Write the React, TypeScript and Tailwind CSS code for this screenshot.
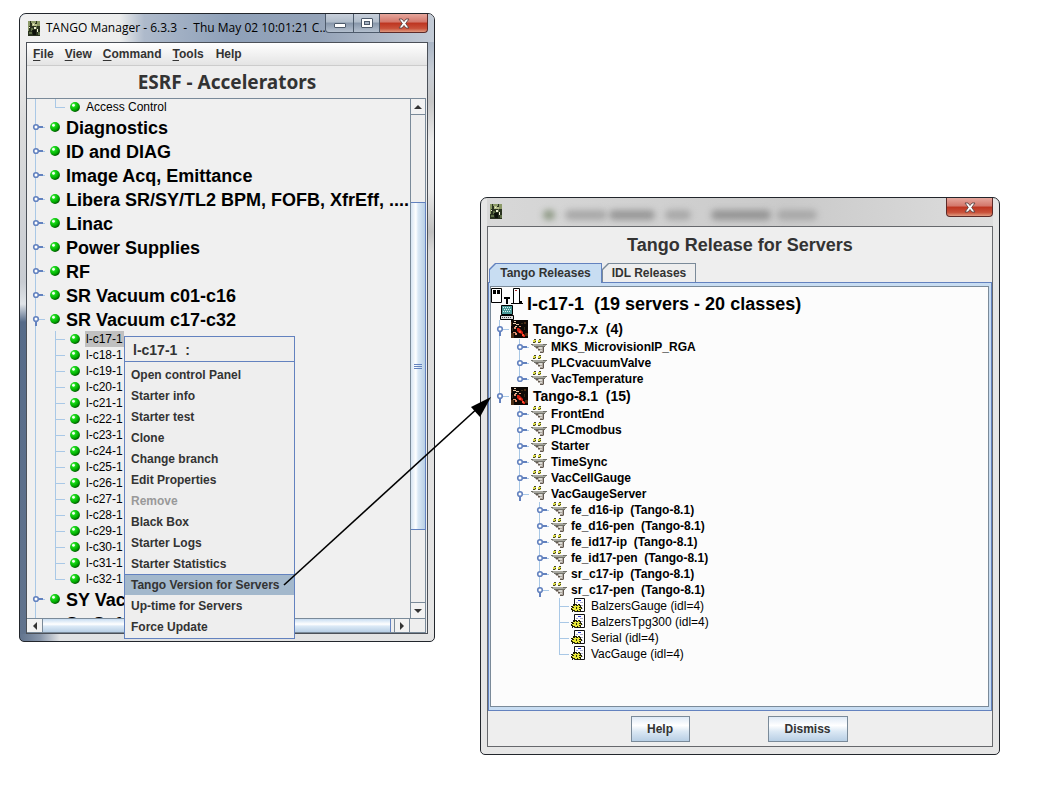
import React from 'react';

type Guide = 'none' | 'line' | 'tee' | 'elbow' | 'closed' | 'open' | 'closedEnd' | 'openEnd';

function GuideCell({ kind, h }: { kind: Guide; h: number }) {
  const mid = Math.floor(h / 2);
  const ends = kind === 'elbow' || kind === 'closedEnd' || kind === 'openEnd';
  const branch = kind !== 'none' && kind !== 'line';
  const closed = kind === 'closed' || kind === 'closedEnd';
  const open = kind === 'open' || kind === 'openEnd';
  return (
    <svg width="20" height={h} viewBox={`0 0 20 ${h}`} className="block shrink-0" aria-hidden="true">
      {kind !== 'none' && <rect x="8" y="0" width="1" height={ends ? mid + 1 : h} fill="#a9c8e6" />}
      {branch && <rect x="8" y={mid} width="10" height="1" fill="#a9c8e6" />}
      {closed && <rect x="10" y={mid - 1} width="6" height="2" fill="#6382bf" />}
      {open && <rect x="8" y={mid + 1} width="2" height="6" fill="#6382bf" />}
      {(closed || open) && <circle cx="9" cy={mid} r="2.3" fill="#fff" stroke="#6382bf" strokeWidth="1.6" />}
    </svg>
  );
}

function Ball() {
  return (
    <svg width="10" height="10" viewBox="0 0 11 11" className="ml-[3px] block shrink-0" aria-hidden="true">
      <defs>
        <radialGradient id="ball" cx="0.35" cy="0.3" r="0.75">
          <stop offset="0" stopColor="#a8ffa0" />
          <stop offset="0.3" stopColor="#18d818" />
          <stop offset="0.7" stopColor="#00a800" />
          <stop offset="1" stopColor="#004800" />
        </radialGradient>
      </defs>
      <circle cx="5.5" cy="5.5" r="5.4" fill="url(#ball)" />
      <circle cx="3.8" cy="3.6" r="1.5" fill="#fff" fillOpacity="0.95" />
    </svg>
  );
}

function AppIcon() {
  return (
    <svg width="12" height="15" viewBox="0 0 12 15" className="block shrink-0" aria-hidden="true">
      <rect width="12" height="15" fill="#2a3320" />
      <path d="M0 0h2v5H1v5H0zM3 0h5v2H3zM9 0h3v5H9z" fill="#8c9a68" />
      <path d="M4 2h3v3H4zM7 3h2v2H7z" fill="#b4bc88" />
      <path d="M5 3h1v1H5zM6 6h2v2H6zM9 8h1v3H9zM1 6h1v1H1z" fill="#eef0d4" />
      <path d="M3 7h2v3H3zM8 5h1v3H8zM1 11h3v2H1zM10 11h2v3h-2z" fill="#5f7048" />
      <path d="M4 9h4v5H5z" fill="#0c100a" />
    </svg>
  );
}

function DancerIcon() {
  return (
    <svg width="17" height="18" viewBox="0 0 17 18" className="block shrink-0" aria-hidden="true">
      <rect width="17" height="18" fill="#0c0806" />
      <path d="M0 2h1v4H0zM0 13h3v5H0zM13 2h2v2h-2zM14 13h3v3h-3z" fill="#4a2c14" />
      <path d="M3 1h2v1H3zM2 3h3v1H2zM5 4h3v1H5zM4 6h2v1H4z" fill="#e8c8a8" />
      <path d="M6 8h2l2 2 2 2v2l2 1v2h-2l-1-3-3-1-2-2z" fill="#d81c10" />
      <path d="M3 7h2v2H3zM8 6h2v1H8zM2 12h3v1H2zM4 13h2v2H4z" fill="#e09070" />
      <path d="M8 11h2v2H8zM11 14h2v2h-2z" fill="#ff5030" />
      <path d="M1 8h1v3H1zM13 7h1v3h-1zM10 3h2v1h-2z" fill="#382814" />
    </svg>
  );
}

function ServerIcon() {
  return (
    <svg width="16" height="15" viewBox="0 0 16 15" className="block shrink-0" aria-hidden="true">
      <path d="M2 1h3v3H2zM7 1h3v3H7z" fill="#dede48" />
      <path d="M3 0h2v1H3zM4 2h1v1H4zM8 0h2v1H8zM9 2h1v1H9zM2 3h2v1H2zM7 3h2v1H7z" fill="#44442c" />
      <path d="M1 5h14v2H1z" fill="#a8a8a0" />
      <path d="M0 5h2v1H0zM12 5h4v1h-4zM3 7h11v1H3z" fill="#707068" />
      <path d="M5 8h8v6H9v-2H7v-2H5z" fill="#b0a8a0" />
      <path d="M4 8h3v1H5zM7 10h2v1H7zM12 8h1v5h-1zM9 13h3v1H9z" fill="#605850" />
      <path d="M8 8h3v2H8zM9 11h2v1H9z" fill="#dcdcd6" />
    </svg>
  );
}

function ClassIcon() {
  return (
    <svg width="15" height="15" viewBox="0 0 15 15" className="block shrink-0" aria-hidden="true">
      <path d="M3.5.5h10v13h-10z" fill="#fff" stroke="#111" />
      <path d="M7 2h3v1H7z" fill="#2838d8" />
      <path d="M5 4h2v1H5zM9 4h3v1H9zM10 7h2v1h-2zM11 10h1v1h-1z" fill="#b0b0cc" />
      <path d="M2 6h1v1h1V6h2v1h1V6h2v1h1v2h1v2h-1v2H9v1H7v-1H6v1H4v-1H2v1H1v-2H0v-2h1V9H0V8h2z" fill="#222206" />
      <path d="M2 8h2V7h1v1h2V7h1v1h1v1H8v1h2v1H8v1h1v1H7v-1H6v1H4v-1H2v-1H1v-1h2V9H2z" fill="#e8e838" />
      <path d="M5 9h1v2H5z" fill="#333308" />
    </svg>
  );
}

function HostIcon() {
  return (
    <svg width="32" height="32" viewBox="0 0 32 32" className="block shrink-0" aria-hidden="true">
      <path d="M.5.5h10v14h-10z" fill="#fff" stroke="#000" />
      <path d="M2 2h3v4H2zM6 2h3v4H6z" fill="#000" />
      <path d="M22.500.5h6v15h-6z" fill="#fff" stroke="#000" />
      <path d="M24 2h2v1h-2z" fill="#a02020" />
      <path d="M20 15h12v1H20zM29 13h2v2h-2zM13 9h6v2h-2v5h-2v-5h-2z" fill="#000" />
      <path d="M10.500 17.500h11v9h-11z" fill="#4a9a98" stroke="#000" />
      <path d="M12 19h1v1h-1zM14 19h1v1h-1zM16 19h1v1h-1zM18 19h1v1h-1zM13 21h1v1h-1zM15 21h1v1h-1zM17 21h1v1h-1zM19 21h1v1h-1zM12 23h1v1h-1zM14 23h1v1h-1zM16 23h1v1h-1zM18 23h1v1h-1z" fill="#d8f0f0" />
      <path d="M9.500 27.500h13v4h-13z" fill="#ddd" stroke="#000" />
      <path d="M11 29h1v1h-1zM13 29h1v1h-1zM15 29h1v1h-1zM17 29h1v1h-1zM19 29h1v1h-1z" fill="#444" />
    </svg>
  );
}

function CloseGlyph() {
  return (
    <svg width="12" height="11" viewBox="0 0 12 11" aria-hidden="true">
      <path d="M1 1h3l2 2.500L8 1h3L7.700 5.500 11 10H8L6 7.500 4 10H1l3.300-4.500z" fill="#fff" stroke="#5b4444" strokeWidth="0.9" />
    </svg>
  );
}

const CLOSE =
  'flex items-center justify-center rounded-b-[4px] border border-t-0 border-[#5c2a28] bg-[linear-gradient(#e6a79d_0%,#d3766a_45%,#bd3420_50%,#c9513a_80%,#e09a80_100%)]';

const groups = ['Diagnostics', 'ID and DIAG', 'Image Acq, Emittance', 'Libera SR/SY/TL2 BPM, FOFB, XfrEff, ....', 'Linac', 'Power Supplies', 'RF', 'SR Vacuum c01-c16'];
const hosts = Array.from({ length: 16 }, (_, i) => `l-c${17 + i}-1`);

function BigRow({ label, open }: { label: string; open?: boolean }) {
  return (
    <li role="treeitem" aria-expanded={!!open} className="flex h-6 items-center">
      <GuideCell kind={open ? 'open' : 'closed'} h={24} />
      <Ball />
      <span className="ml-1.5 pt-px text-lg leading-6 font-bold whitespace-pre">{label}</span>
    </li>
  );
}

function SmallRow({ label, last, selected }: { label: string; last?: boolean; selected?: boolean }) {
  return (
    <li role="treeitem" aria-selected={!!selected} className="flex h-4 items-center">
      <GuideCell kind="line" h={16} />
      <GuideCell kind={last ? 'elbow' : 'tee'} h={16} />
      <Ball />
      <span className={`ml-[5px] px-px text-xs leading-4 whitespace-pre ${selected ? 'bg-[#c0c0c0]' : ''}`}>{label}</span>
    </li>
  );
}

const menuItems = ['Open control Panel', 'Starter info', 'Starter test', 'Clone', 'Change branch', 'Edit Properties', 'Remove', 'Black Box', 'Starter Logs', 'Starter Statistics', 'Tango Version for Servers', 'Up-time for Servers', 'Force Update'];

function ContextMenu() {
  return (
    <div role="menu" aria-label="l-c17-1" className="absolute top-[336px] left-[124px] w-[171px] border border-[#6382bf] bg-[#eeeeee] text-[#333333]">
      <div className="mb-0.5 h-[25px] border-b border-[#6382bf] pl-2 text-sm leading-[26px] font-bold whitespace-pre">{'l-c17-1  :'}</div>
      <div className="pb-px">
        {menuItems.map((m) => (
          <button
            key={m}
            role="menuitem"
            disabled={m === 'Remove'}
            className={`block h-[21px] w-full pl-1.5 text-left text-xs font-bold whitespace-nowrap disabled:text-[#999999] ${m === 'Tango Version for Servers' ? 'border-t border-[#6382bf] bg-[#a3b8cc] leading-5' : 'pt-px leading-5'}`}
          >
            {m}
          </button>
        ))}
      </div>
    </div>
  );
}

const SCROLL_BTN = 'flex shrink-0 items-center justify-center border border-[#7a8a99] bg-[#f2f2f2]';

function Triangle({ d }: { d: string }) {
  return (
    <svg width="8" height="8" viewBox="0 0 8 8" aria-hidden="true">
      <path d={d} fill="#333" />
    </svg>
  );
}

function ManagerWindow() {
  return (
    <section
      aria-label="TANGO Manager"
      className="absolute top-[13px] left-[19px] flex w-[416px] flex-col rounded-t-[7px] rounded-b-[5px] border border-[#22262c] bg-[linear-gradient(90deg,#61738d_0px,#8896aa_20px,#e0e2e4_40px,#e4e4e4_100%)] pb-[7px]"
    >
      <header className="flex h-7 shrink-0 items-start rounded-t-[6px] bg-[linear-gradient(90deg,#f0f0f0_0%,#eceded_24%,#aebacb_30%,#8fa1b9_50%,#94a3b8_72%,#c3cbd6_100%)] pl-2">
        <div className="flex min-w-0 grow items-center gap-1.5 pt-1.5">
          <AppIcon />
          <h1 className="font-['Open_Sans',sans-serif] text-xs leading-4 whitespace-pre text-black">{'TANGO Manager - 6.3.3  -  Thu May 02 10:01:21 C...'}</h1>
        </div>
        <div className="mr-1.5 flex h-[19px] shrink-0">
          <button aria-label="Minimize" className="flex w-[29px] items-center justify-center rounded-bl-[4px] border border-t-0 border-[#4d5a6b] bg-[linear-gradient(#c8d0db_0%,#b0bcca_45%,#8796aa_50%,#b4c0cf_100%)]">
            <span className="mt-1 h-[5px] w-3 rounded-[1px] border border-[#4d5a6b] bg-white" />
          </button>
          <button aria-label="Maximize" className="flex w-[26px] items-center justify-center border-r border-b border-[#4d5a6b] bg-[linear-gradient(#c8d0db_0%,#b0bcca_45%,#8796aa_50%,#b4c0cf_100%)]">
            <span className="flex h-2.5 w-3 items-center justify-center rounded-[1px] border border-[#4d5a6b] bg-white">
              <span className="h-1 w-1.5 border border-[#4d5a6b] bg-[#a5b2c2]" />
            </span>
          </button>
          <button aria-label="Close" className={`${CLOSE} w-12 rounded-bl-none border-l-0`}>
            <CloseGlyph />
          </button>
        </div>
      </header>
      <div className="flex">
        <div className="w-1.5 shrink-0 bg-[linear-gradient(#f0f0f0_0px,#dcdcdc_80px,#c8ccd2_240px,#e0e4e8_262px,#566b89_280px,#61738d_100%)]" />
        <div className="flex min-w-0 grow flex-col border border-[#4b5058] bg-[#eeeeee]">
          <nav className="flex h-[23px] shrink-0 gap-3 border-b border-[#cccccc] bg-[linear-gradient(#ffffff,#e4e4e4)] pl-1.5 text-xs leading-[22px] font-bold text-[#333333]">
            {['File', 'View', 'Command', 'Tools', 'Help'].map((m) => (
              <button key={m} className="-ml-px first:ml-0 last:ml-0">
                {m === 'Help' ? m : <><span className="underline underline-offset-2">{m[0]}</span>{m.slice(1)}</>}
              </button>
            ))}
          </nav>
          <h2 className="h-8 shrink-0 text-center font-['Noto_Sans',sans-serif] text-[19px] leading-8 font-bold text-[#333333]">ESRF - Accelerators</h2>
          <div className="mr-px flex h-[520px] border-t border-[#7a8a99]">
            <div className="h-[519px] min-w-0 grow overflow-hidden bg-[#f0f0f0]">
              <ul role="tree" aria-label="Hosts" className="text-black">
                <SmallRow label="Access Control" last />
                {groups.map((g) => <BigRow key={g} label={g} />)}
                <BigRow label="SR Vacuum c17-c32" open />
                {hosts.map((h, i) => <SmallRow key={h} label={h} last={i === 15} selected={i === 0} />)}
                <BigRow label="SY Vacuum" />
                <BigRow label="Sy Safety" />
              </ul>
            </div>
            <div className="flex w-4 shrink-0 flex-col border-l border-[#7a8a99]">
              <button aria-label="Scroll up" className={`${SCROLL_BTN} h-4 border-t-0 border-l-0`}><Triangle d="M0 6l4-4 4 4z" /></button>
              <div className="h-[87px] border-r border-[#7a8a99] bg-[#eeeeee]" />
              <div className="flex h-[328px] flex-col items-center justify-center gap-px border border-l-0 border-[#6382bf] bg-[linear-gradient(90deg,#d6e4f2,#ffffff_35%,#dbe9f6_50%,#b8cfe5)]">
                <span className="h-px w-2 bg-[#6382bf]" /><span className="h-px w-2 bg-[#6382bf]" /><span className="h-px w-2 bg-[#6382bf]" />
              </div>
              <div className="grow border-r border-[#7a8a99] bg-[#eeeeee]" />
              <button aria-label="Scroll down" className={`${SCROLL_BTN} h-4 border-b-0 border-l-0`}><Triangle d="M0 2l4 4 4-4z" /></button>
            </div>
          </div>
          <div className="mr-px flex h-[15px] border-y border-r border-[#7a8a99]">
            <button aria-label="Scroll left" className={`${SCROLL_BTN} w-4 border-y-0 border-l-0`}><Triangle d="M6 0L2 4l4 4z" /></button>
            <div className="w-[348px] border-r border-[#6382bf] bg-[linear-gradient(#c8ddf2,#ffffff_40%,#dbe9f6_55%,#b8cfe5)]" />
            <div className="w-[3px] bg-[#eeeeee]" />
            <button aria-label="Scroll right" className={`${SCROLL_BTN} w-4 border-y-0`}><Triangle d="M2 0l4 4-4 4z" /></button>
          </div>
        </div>
        <div className="w-1.5 shrink-0 bg-[linear-gradient(#a9b5c5_0px,#c8ced6_30px,#c6c6c6_60px,#ececec_100px,#e8e8e8_150px,#c0c0c0_190px,#dadada_210px,#e6e6e6_100%)]" />
      </div>
    </section>
  );
}

type Row = { g: Guide[]; t: string; kind: 'tango' | 'server' | 'class' };
const sub = (g: Guide[], names: string[]): Row[] => names.map((t) => ({ g: [...g, 'closed'], t, kind: 'server' }));
const rows: Row[] = [
  { g: ['open'], t: 'Tango-7.x  (4)', kind: 'tango' },
  ...sub(['line'], ['MKS_MicrovisionIP_RGA', 'PLCvacuumValve']),
  { g: ['line', 'closedEnd'], t: 'VacTemperature', kind: 'server' },
  { g: ['openEnd'], t: 'Tango-8.1  (15)', kind: 'tango' },
  ...sub(['none'], ['FrontEnd', 'PLCmodbus', 'Starter', 'TimeSync', 'VacCellGauge']),
  { g: ['none', 'openEnd'], t: 'VacGaugeServer', kind: 'server' },
  ...sub(['none', 'none'], ['fe_d16-ip  (Tango-8.1)', 'fe_d16-pen  (Tango-8.1)', 'fe_id17-ip  (Tango-8.1)', 'fe_id17-pen  (Tango-8.1)', 'sr_c17-ip  (Tango-8.1)']),
  { g: ['none', 'none', 'openEnd'], t: 'sr_c17-pen  (Tango-8.1)', kind: 'server' },
  { g: ['none', 'none', 'none', 'tee'], t: 'BalzersGauge (idl=4)', kind: 'class' },
  { g: ['none', 'none', 'none', 'tee'], t: 'BalzersTpg300 (idl=4)', kind: 'class' },
  { g: ['none', 'none', 'none', 'tee'], t: 'Serial (idl=4)', kind: 'class' },
  { g: ['none', 'none', 'none', 'elbow'], t: 'VacGauge (idl=4)', kind: 'class' },
];

const rowStyle = {
  tango: 'h-[19px] gap-[5px] text-sm leading-[19px] font-bold',
  server: 'h-4 gap-1 text-xs leading-4 font-bold',
  class: 'h-4 gap-[5px] text-xs leading-4',
};

function Tab({ label, active }: { label: string; active?: boolean }) {
  return (
    <button
      role="tab"
      aria-selected={!!active}
      className={`p-px pb-0 [clip-path:polygon(6px_0,100%_0,100%_100%,0_100%,0_6px)] ${active ? 'h-5 w-[113px] bg-[#6382bf]' : 'h-5 w-[94px] border-b border-[#6382bf] bg-[#7a8a99]'}`}
    >
      <span className={`block h-full text-center text-xs leading-[18px] font-bold text-[#333333] [clip-path:polygon(6px_0,100%_0,100%_100%,0_100%,0_6px)] ${active ? 'bg-[#c8ddf2]' : 'bg-[#eeeeee]'}`}>{label}</span>
    </button>
  );
}

const BTN = 'h-[26px] border border-[#7a8a99] bg-[linear-gradient(#dfeaf6,#ffffff_35%,#dbe8f4_60%,#b8cfe5)] text-xs font-bold text-[#333333]';

const ghosts = [
  { left: 56, width: 12, color: '#8f9a86' },
  { left: 78, width: 42, color: '#a8a8a8' },
  { left: 122, width: 46, color: '#989898' },
  { left: 178, width: 26, color: '#a8a8a8' },
  { left: 224, width: 60, color: '#959595' },
  { left: 290, width: 40, color: '#a8a8a8' },
];

function ReleaseWindow() {
  return (
    <section aria-label="Tango Release" className="absolute top-[197px] left-[480px] flex w-[520px] flex-col rounded-t-[7px] rounded-b-[5px] border border-[#22262c] bg-[#e6e6e6] px-1.5 pb-[7px]">
      <header className="relative flex h-7 shrink-0 items-start justify-between bg-[linear-gradient(90deg,#d8d8d8,#cacaca_60%,#dddddd)]">
        {ghosts.map((g) => (
          <span key={g.left} aria-hidden="true" className="absolute top-3 h-2.5 rounded-full blur-[3px]" style={{ left: g.left, width: g.width, background: g.color }} />
        ))}
        <div className="pt-1.5 pl-[3px]"><AppIcon /></div>
        <button aria-label="Close" className={`${CLOSE} h-[19px] w-[47px]`}><CloseGlyph /></button>
      </header>
      <div className="flex flex-col border border-[#66686c] bg-[#eeeeee]">
        <h2 className="h-9 text-center text-lg leading-9 font-bold text-[#333333]">Tango Release for Servers</h2>
        <div role="tablist" className="z-10 -mb-px flex items-end pl-px">
          <Tab label="Tango Releases" active />
          <Tab label="IDL Releases" />
        </div>
        <div className="flex h-[429px] border border-[#6382bf] bg-[#c8ddf2] pt-[3px] pr-0.5 pb-[3px] pl-px">
          <div className="grow border border-[#7a8a99] bg-[#fcfcfc] text-black">
            <div className="flex h-[33px] items-center gap-1">
              <HostIcon />
              <span className="text-lg leading-8 font-bold whitespace-pre">{'l-c17-1  (19 servers - 20 classes)'}</span>
            </div>
            <ul role="tree" aria-label="Servers">
              {rows.map((r) => (
                <li key={r.t} role="treeitem" className={`flex items-center whitespace-pre ${rowStyle[r.kind]}`}>
                  <span className="flex">
                    {r.g.map((k, i) => <GuideCell key={i} kind={k} h={r.kind === 'tango' ? 19 : 16} />)}
                    {r.kind === 'tango' ? <DancerIcon /> : r.kind === 'server' ? <ServerIcon /> : <ClassIcon />}
                  </span>
                  <span>{r.t}</span>
                </li>
              ))}
            </ul>
          </div>
        </div>
        <div className="flex h-[35px] items-center justify-center gap-[78px] pr-0.5">
          <button className={`${BTN} w-[59px]`}>Help</button>
          <button className={`${BTN} w-20`}>Dismiss</button>
        </div>
      </div>
    </section>
  );
}

export default function App() {
  return (
    <main className="relative min-h-screen overflow-hidden bg-white font-['Liberation_Sans',Arial,sans-serif]">
      <ManagerWindow />
      <ReleaseWindow />
      <ContextMenu />
      <svg className="pointer-events-none absolute top-[390px] left-[280px]" width="220" height="200" viewBox="280 390 220 200" aria-hidden="true">
        <path d="M284 585L480 406" stroke="#000" strokeWidth="1.6" />
        <path d="M491 397L471 407L480 417z" fill="#000" />
      </svg>
    </main>
  );
}
